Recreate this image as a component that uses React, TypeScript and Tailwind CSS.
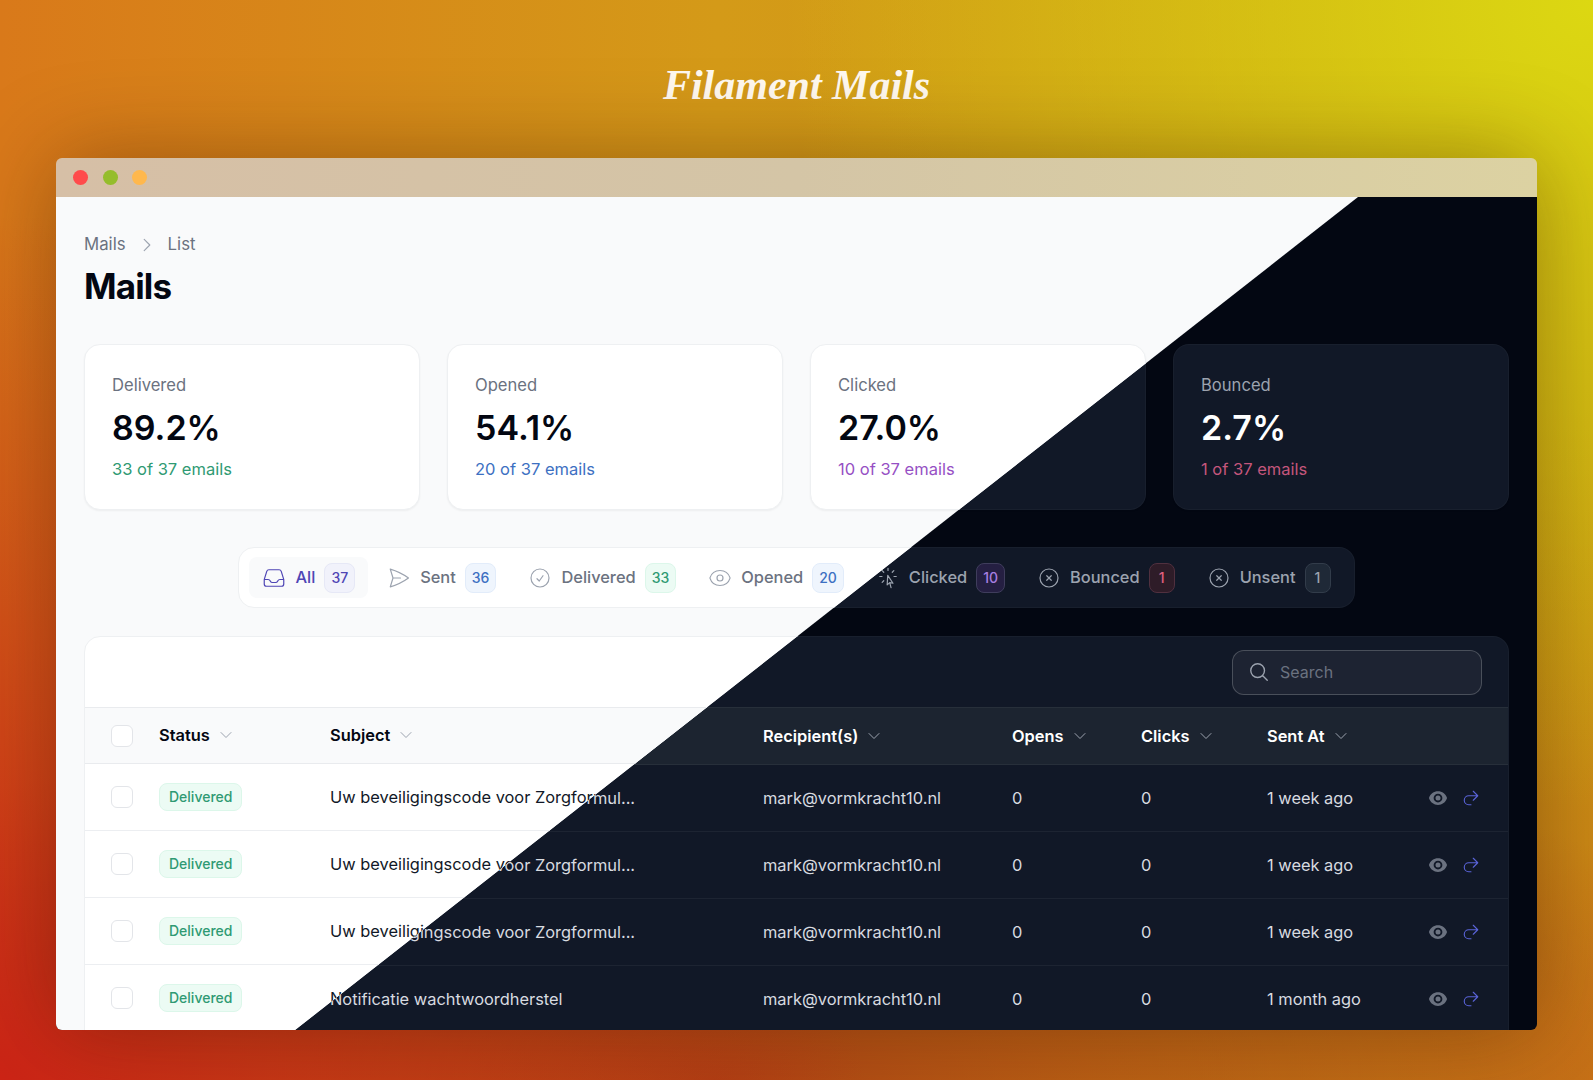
import { IconType } from "react-icons"
import {
  HiEye,
  HiOutlineArrowUturnRight,
  HiOutlineCheckCircle,
  HiOutlineChevronDown,
  HiOutlineChevronRight,
  HiOutlineCursorArrowRays,
  HiOutlineEye,
  HiOutlineInbox,
  HiOutlineMagnifyingGlass,
  HiOutlinePaperAirplane,
  HiOutlineXCircle,
} from "react-icons/hi2"

const stats = [
  { label: "Delivered", value: "89.2%", note: "33 of 37 emails", color: "text-[#2f9a73]" },
  { label: "Opened", value: "54.1%", note: "20 of 37 emails", color: "text-[#3d70c2]" },
  { label: "Clicked", value: "27.0%", note: "10 of 37 emails", color: "text-[#9650c4]" },
  { label: "Bounced", value: "2.7%", note: "1 of 37 emails", color: "text-[#c4567c]" },
]

type Tab = {
  label: string
  count: number
  icon: IconType
  light: string
  dark: string
}

const tabs: Tab[] = [
  { label: "All", count: 37, icon: HiOutlineInbox, light: "bg-[#f1f2fb] border-[#e6e8f6] text-[#4f46b5]", dark: "bg-[#1e2140] border-[#34386a] text-[#8b8fe8]" },
  { label: "Sent", count: 36, icon: HiOutlinePaperAirplane, light: "bg-[#eff5fd] border-[#e2ecfa] text-[#3d70c2]", dark: "bg-[#1a2b45] border-[#2d4468] text-[#6ea0e8]" },
  { label: "Delivered", count: 33, icon: HiOutlineCheckCircle, light: "bg-[#ecfbf4] border-[#dcf7ea] text-[#2f9a73]", dark: "bg-[#123029] border-[#1f4a3e] text-[#4fc79a]" },
  { label: "Opened", count: 20, icon: HiOutlineEye, light: "bg-[#eff5fd] border-[#e2ecfa] text-[#3d70c2]", dark: "bg-[#1a2b45] border-[#2d4468] text-[#6ea0e8]" },
  { label: "Clicked", count: 10, icon: HiOutlineCursorArrowRays, light: "bg-[#f6effc] border-[#ecdff8] text-[#9650c4]", dark: "bg-[#251f42] border-[#3f3d5c] text-[#a77ee0]" },
  { label: "Bounced", count: 1, icon: HiOutlineXCircle, light: "bg-[#fdf0f4] border-[#fae2ea] text-[#c4567c]", dark: "bg-[#2e1c28] border-[#50303f] text-[#e0607f]" },
  { label: "Unsent", count: 1, icon: HiOutlineXCircle, light: "bg-[#f3f4f6] border-[#e5e7eb] text-[#4b5563]", dark: "bg-[#1f2937] border-[#323c4a] text-[#9ca3af]" },
]

const rows = [
  { subject: "Uw beveiligingscode voor Zorgformul...", sent: "1 week ago" },
  { subject: "Uw beveiligingscode voor Zorgformul...", sent: "1 week ago" },
  { subject: "Uw beveiligingscode voor Zorgformul...", sent: "1 week ago" },
  { subject: "Notificatie wachtwoordherstel", sent: "1 month ago" },
]

const columns = ["Status", "Subject", "Recipient(s)", "Opens", "Clicks", "Sent At"]

const Screen = ({ dark }: { dark: boolean }) => {
  const card = dark ? "bg-[#111827] border-white/[0.03]" : "bg-white border-[#eef0f2]"
  const check = dark ? "bg-white/5 border-white/15" : "bg-white border-[#e3e5e9]"

  return (
    <div className={`h-full overflow-hidden px-7 pt-9 ${dark ? "bg-[#030712]" : "bg-[#f9fafb]"}`}>
      <div className="flex h-6 items-center gap-3 text-[16.8px] text-[#6b7280]">
        <span>Mails</span>
        <HiOutlineChevronRight className="size-[18px] text-[#9ca3af]" />
        <span>List</span>
      </div>
      <h1 className={`mt-[6px] text-[35px] leading-[46px] font-bold tracking-tight ${dark ? "text-white" : "text-[#030712]"}`}>
        Mails
      </h1>

      <div className="mt-[35px] grid grid-cols-4 gap-[27px]">
        {stats.map((s) => (
          <div key={s.label} className={`h-[166px] rounded-2xl border px-[27px] pt-7 shadow-xs ${card}`}>
            <p className={`text-[16.6px] leading-6 ${dark ? "text-[#9ca3af]" : "text-[#6b7280]"}`}>{s.label}</p>
            <p className={`mt-[9px] text-[34px] leading-[44px] font-semibold ${dark ? "text-white" : "text-[#030712]"}`}>
              {s.value}
            </p>
            <p className={`mt-[7px] text-[16.5px] leading-6 ${s.color}`}>{s.note}</p>
          </div>
        ))}
      </div>

      <div className="mt-[37px] flex justify-center">
        <div className={`flex gap-[6px] rounded-2xl border px-[10px] py-[9px] ${card}`}>
          {tabs.map((t, i) => {
            const Icon = t.icon
            const active = i === 0
            return (
              <div
                key={t.label}
                className={`flex h-[41px] items-center gap-[9px] rounded-lg px-[13px] text-[16.4px] font-medium ${
                  active ? (dark ? "bg-white/5 text-[#8b8fe8]" : "bg-[#f9fafb] text-[#4f46b5]") : dark ? "text-[#9ca3af]" : "text-[#6b7280]"
                }`}
              >
                <Icon className={`size-6 ${active ? "" : "text-[#9ca3af]"}`} strokeWidth={1.2} />
                <span>{t.label}</span>
                <span className={`flex h-[30px] min-w-[26px] items-center justify-center rounded-lg border px-[6px] text-sm ${dark ? t.dark : t.light}`}>
                  {t.count}
                </span>
              </div>
            )
          })}
        </div>
      </div>

      <div className={`mt-7 rounded-t-2xl border ${card}`}>
        <div className="flex h-[70px] items-center justify-end pr-[26px]">
          <div className={`flex h-[45px] w-[250px] items-center gap-[10px] rounded-xl border px-[15px] ${dark ? "bg-white/5 border-white/20" : "bg-white border-[#e3e5e9]"}`}>
            <HiOutlineMagnifyingGlass className="size-[22px] text-[#9ca3af]" />
            <span className="text-base text-[#6b7280]">Search</span>
          </div>
        </div>

        <div className={`grid grid-cols-[47px_171px_433px_249px_129px_126px_1fr] items-center border-y pl-[27px] ${dark ? "h-[58px] bg-[#1c2430] border-white/5" : "h-[57px] bg-[#f9fafb] border-[#e9ebee]"}`}>
          <div className={`-ml-px size-[22px] rounded-md border ${check}`} />
          {columns.map((c) => (
            <div key={c} className={`flex items-center gap-2 text-[16.4px] font-semibold ${dark ? "text-white" : "text-[#030712]"}`}>
              {c}
              <HiOutlineChevronDown className="size-4 text-[#9ca3af]" />
            </div>
          ))}
        </div>

        {rows.map((r, i) => (
          <div key={i} className={`grid h-[67px] grid-cols-[47px_171px_433px_249px_129px_126px_161px_1fr] items-center border-b pl-[27px] text-[16.4px] ${dark ? "border-white/5 text-[#d8dbe0]" : "border-[#eceef1] text-[#111827]"}`}>
            <div className={`-ml-px size-[22px] rounded-md border ${check}`} />
            <div>
              <span className={`inline-flex h-7 items-center rounded-lg border px-[9px] text-sm font-medium ${dark ? "bg-[#123029] border-[#1f4a3e] text-[#4fc79a]" : "bg-[#ecfbf4] border-[#dcf7ea] text-[#2f9a73]"}`}>
                Delivered
              </span>
            </div>
            <div>{r.subject}</div>
            <div>mark@vormkracht10.nl</div>
            <div>0</div>
            <div>0</div>
            <div>{r.sent}</div>
            <div className="flex items-center gap-[14px]">
              <HiEye className="size-5 text-[#6b7280]" />
              <HiOutlineArrowUturnRight className="size-[18px] text-[#5a63d8]" />
            </div>
          </div>
        ))}
      </div>
    </div>
  )
}

export default function App() {
  return (
    <div className="flex h-[1080px] w-full flex-col overflow-hidden bg-[radial-gradient(circle_at_100%_0%,#dcd812_0%,rgba(220,216,18,0)_42%),radial-gradient(circle_at_0%_100%,#cc2416_0%,rgba(204,36,22,0)_45%),radial-gradient(ellipse_70%_35%_at_45%_100%,#b04414_0%,rgba(176,68,20,0)_100%),radial-gradient(circle_at_100%_100%,#cc7c18_0%,rgba(204,124,24,0)_35%),linear-gradient(to_right,#d9791a,#d49a18_45%,#c9a012)] px-14 pb-[50px] font-['Inter',sans-serif]">
      <h2 className="flex h-[158px] shrink-0 items-center justify-center pt-[12px] font-['Liberation_Serif',cursive] text-[42px] font-bold text-[#fff9ef] italic">
        Filament Mails
      </h2>

      <div className="flex min-h-0 flex-1 flex-col overflow-hidden rounded-md shadow-[0_0_90px_rgba(60,20,0,0.4)]">
        <div className="flex h-[39px] shrink-0 items-center gap-[14.5px] bg-[linear-gradient(to_right,#d6bfa6,#d4c5a6_50%,#dcd2a2)] pl-[17px]">
          <span className="size-[15px] rounded-full bg-[#ff4b4b]" />
          <span className="size-[15px] rounded-full bg-[#95bd2c]" />
          <span className="size-[15px] rounded-full bg-[#ffb84d]" />
        </div>

        <div className="relative min-h-0 flex-1">
          <Screen dark />
          {/* light half of the page, cut along the diagonal */}
          <div className="absolute inset-0 [clip-path:polygon(0_0,1302px_0,239px_100%,0_100%)]">
            <Screen dark={false} />
          </div>
        </div>
      </div>
    </div>
  )
}
